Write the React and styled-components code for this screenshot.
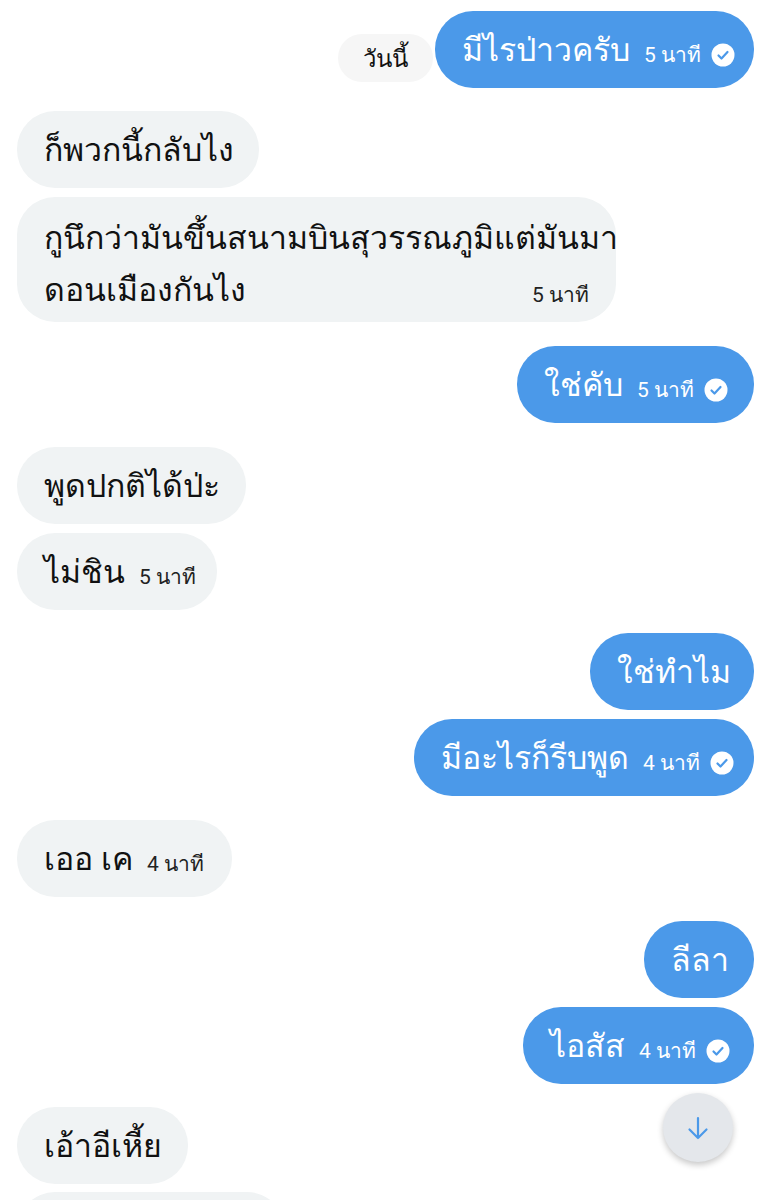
import React from "react";
import styled, { createGlobalStyle } from "styled-components";

const Global = createGlobalStyle`
  html, body { margin: 0; padding: 0; background: #fff; }
`;

const Page = styled.div`
  position: relative;
  width: 771px;
  height: 1200px;
  overflow: hidden;
  background: #fff;
  padding: 11px 17px 0;
  box-sizing: border-box;
  font-family: "Roboto", sans-serif;
  display: flex;
  flex-direction: column;
`;

const Row = styled.div`
  display: flex;
  flex: none;
  align-items: flex-end;
  justify-content: ${(p) => (p.$me ? "flex-end" : "flex-start")};
  margin-top: ${(p) => p.$gap ?? 0}px;
`;

const Bubble = styled.div`
  box-sizing: border-box;
  display: flex;
  align-items: center;
  flex: none;
  width: ${(p) => p.$w}px;
  height: 77px;
  padding: 0 27px;
  border-radius: 38px;
  background: ${(p) => (p.$me ? "#4b99e9" : "#f0f3f4")};
  color: ${(p) => (p.$me ? "#fff" : "#111")};
  font-size: 32px;
  white-space: nowrap;
`;

const TallBubble = styled(Bubble)`
  display: block;
  height: 125px;
  padding: 18px 27px 0;
  line-height: 47px;
  border-radius: 38px;
`;

const LineEnd = styled.div`
  display: flex;
  justify-content: space-between;
  align-items: center;
`;

const Time = styled.span`
  margin-left: ${(p) => p.$ml ?? 14}px;
  margin-top: 10px;
  font-size: 21px;
  color: ${(p) => (p.$me ? "#fff" : "#222")};
`;

const DatePill = styled.div`
  flex: none;
  display: flex;
  align-items: center;
  justify-content: center;
  width: 95px;
  height: 48px;
  margin: 0 2px 6px 0;
  border-radius: 24px;
  background: #f6f6f6;
  color: #111;
  font-size: 24px;
`;

const Tick = styled.svg`
  flex: none;
  width: 24px;
  height: 24px;
  margin-left: 10px;
  margin-top: 10px;
`;

const ScrollButton = styled.button`
  position: absolute;
  left: 663px;
  top: 1093px;
  width: 70px;
  height: 69px;
  padding: 0;
  border: 0;
  border-radius: 50%;
  background: #e4e7eb;
  box-shadow: 0 3px 6px rgba(0, 0, 0, 0.22);
  display: flex;
  align-items: center;
  justify-content: center;
`;

const Check = () => (
  <Tick viewBox="0 0 24 24">
    <circle cx="12" cy="12" r="11.5" fill="#fff" />
    <path d="M7.5 12.5l3 3 6-6.5" fill="none" stroke="#4b99e9" strokeWidth="2.2" strokeLinecap="round" strokeLinejoin="round" />
  </Tick>
);

const rows = [
  { gap: 23, w: 242, text: "ก็พวกนี้กลับไง" },
  { tall: true, gap: 9 },
  { me: true, gap: 24, w: 237, text: "ใช่คับ", time: "5 นาที", tick: true },
  { gap: 24, w: 229, text: "พูดปกติได้ป่ะ" },
  { gap: 9, w: 200, text: "ไม่ชิน", time: "5 นาที" },
  { me: true, gap: 23, w: 164, text: "ใช่ทำไม" },
  { me: true, gap: 9, w: 340, text: "มีอะไรก็รีบพูด", time: "4 นาที", tick: true },
  { gap: 24, w: 215, text: "เออ เค", time: "4 นาที" },
  { me: true, gap: 24, w: 110, text: "ลีลา" },
  { me: true, gap: 9, w: 231, text: "ไอสัส", time: "4 นาที", tick: true },
  { gap: 23, w: 171, text: "เอ้าอีเหี้ย" },
  { gap: 8, w: 268, text: "" },
];

export default function App() {
  return (
    <Page>
      <Global />
      <Row $me>
        <DatePill>วันนี้</DatePill>
        <Bubble $me $w={319}>
          มีไรป่าวครับ
          <Time $me>5 นาที</Time>
          <Check />
        </Bubble>
      </Row>
      {rows.map((r, i) =>
        r.tall ? (
          <Row key={i} $gap={r.gap}>
            <TallBubble $w={599}>
              กูนึกว่ามันขึ้นสนามบินสุวรรณภูมิแต่มันมา
              <LineEnd>
                ดอนเมืองกันไง
                <Time>5 นาที</Time>
              </LineEnd>
            </TallBubble>
          </Row>
        ) : (
          <Row key={i} $me={r.me} $gap={r.gap}>
            <Bubble $me={r.me} $w={r.w}>
              {r.text}
              {r.time && <Time $me={r.me}>{r.time}</Time>}
              {r.tick && <Check />}
            </Bubble>
          </Row>
        )
      )}
      <ScrollButton aria-label="เลื่อนลง">
        <svg width="22" height="24" viewBox="0 0 22 24" fill="none" stroke="#4b99e9" strokeWidth="2.2" strokeLinecap="round" strokeLinejoin="round">
          <path d="M11 2v20M2.5 13.5L11 22l8.5-8.5" />
        </svg>
      </ScrollButton>
    </Page>
  );
}
